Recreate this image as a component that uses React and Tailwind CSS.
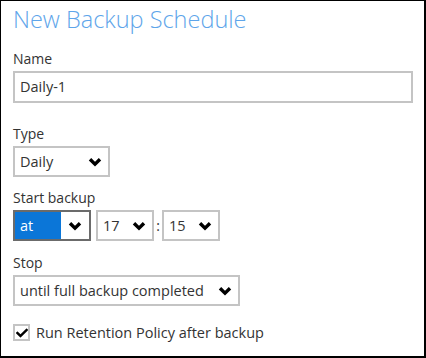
import React from "react";
import { FaCheck } from "react-icons/fa";

function Chevron() {
  return (
    <svg width="14" height="10" viewBox="0 0 14 10">
      <path d="M2 2.2 L7 7.2 L12 2.2" fill="none" stroke="#000" strokeWidth="3.4" strokeLinejoin="miter" strokeLinecap="butt" />
    </svg>
  );
}

function Select({ label, width, highlight, focused, arrowW = 27 }) {
  return (
    <div
      className={`flex h-[31px] items-stretch border-2 bg-white ${focused ? "border-[#6b6b6b]" : "border-[#c4c4c4]"}`}
      style={{ width }}
    >
      <div className={`flex flex-1 items-center whitespace-nowrap pl-[5px] text-[14.5px] ${highlight ? "bg-[#0b76d8] text-white" : "text-[#333]"}`}>
        {label}
      </div>
      <div className="flex items-center justify-center" style={{ width: arrowW }}>
        <Chevron />
      </div>
    </div>
  );
}

export default function App() {
  return (
    <div
      className="h-[358px] w-[426px] border-l border-t border-r-2 border-b-2 border-black bg-white text-[#333]"
      style={{ fontFamily: '"Open Sans", "Noto Sans", sans-serif' }}
    >
      <div className="pl-[12px] pr-[12px]">
        <div className="mt-[2px] text-[23.5px] font-light leading-[32px] text-[#5ea5ea]">New Backup Schedule</div>
        <div className="mt-[15px] text-[14px] leading-[18px]">Name</div>
        <div className="mt-[3px] flex h-[32px] w-[400px] items-center border-2 border-[#c4c4c4] pl-[5px] text-[14.5px]">
          Daily-1
        </div>
        <div className="mt-[22px] text-[14px] leading-[18px]">Type</div>
        <div className="mt-[3px]"><Select label="Daily" width={97} /></div>
        <div className="mt-[12px] text-[14px] leading-[18px]">Start backup</div>
        <div className="mt-[3px] flex items-center">
          <Select label="at" width={78} highlight focused arrowW={28} />
          <div className="ml-[5px]"><Select label="17" width={58} /></div>
          <div className="w-[8px] text-center text-[14px]">:</div>
          <Select label="15" width={58} />
        </div>
        <div className="mt-[13px] text-[14px] leading-[18px]">Stop</div>
        <div className="mt-[3px]"><Select label="until full backup completed" width={227} /></div>
        <div className="mt-[16px] flex items-center">
          <div className="flex h-[17px] w-[17px] items-center justify-center border-2 border-[#c4c4c4]">
            <FaCheck className="h-[12px] w-[12px] text-black" />
          </div>
          <div className="ml-[6px] text-[14.5px]">Run Retention Policy after backup</div>
        </div>
      </div>
    </div>
  );
}
